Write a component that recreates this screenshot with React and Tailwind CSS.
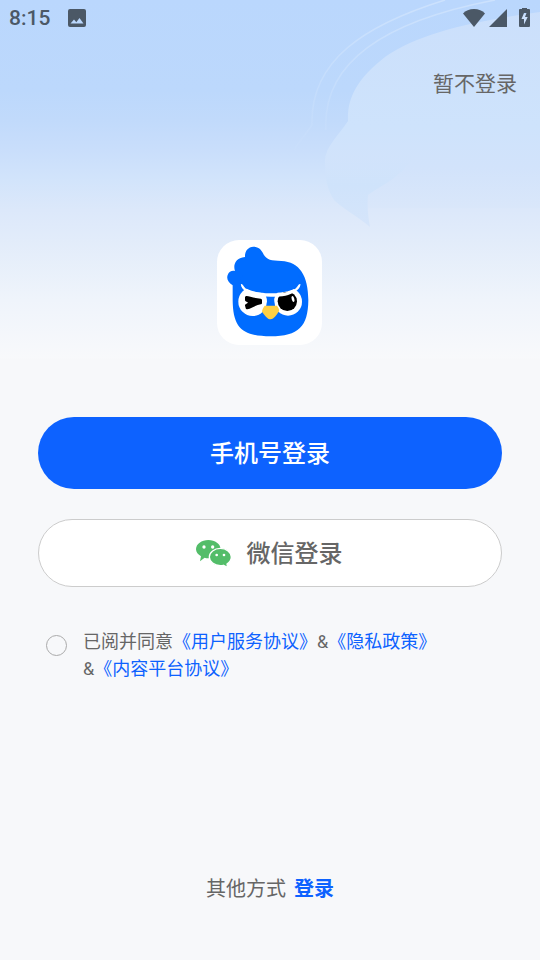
import React, { useState } from "react";

const StatusBar = () => (
  <div className="relative h-9 pl-[9px] pr-[10px] flex items-center justify-between text-[#4b5866]">
    <div className="flex items-center gap-[18px]">
      <span className="text-[21px] leading-9 font-medium font-[Roboto,sans-serif]">8:15</span>
      <svg className="w-[18px] h-[18px]" viewBox="0 0 18 18" aria-hidden="true">
        <path fill="currentColor" fillRule="evenodd" d="M2 0h14a2 2 0 0 1 2 2v14a2 2 0 0 1-2 2H2a2 2 0 0 1-2-2V2a2 2 0 0 1 2-2zM2.500 14.500h13L11.500 9l-3.200 4.200L6 10.500z" />
      </svg>
    </div>
    <div className="flex items-center">
      <svg className="w-[22px] h-[19px]" viewBox="0 0 22 19" aria-hidden="true">
        <path fill="currentColor" d="M11 18 0 4.500C2.500 1.500 6.500 0 11 0S19.500 1.500 22 4.500z" />
      </svg>
      <svg className="w-[18px] h-[18px] ml-1" viewBox="0 0 18 18" aria-hidden="true">
        <path fill="currentColor" d="M18 0v18H0z" />
      </svg>
      <svg className="w-[11px] h-5 ml-3" viewBox="0 0 11 20" aria-hidden="true">
        <path fill="currentColor" fillRule="evenodd" d="M3 0h5v1h2a1 1 0 0 1 1 1v16a1 1 0 0 1-1 1H1a1 1 0 0 1-1-1V2a1 1 0 0 1 1-1h2zM5 5l-2.500 6H5v5.500L8.700 9H6l1.500-4z" />
      </svg>
    </div>
  </div>
);

// pale speech bubble and its outlines behind the header
const HeaderArt = () => (
  <svg className="absolute top-0 right-0 w-[280px] h-[240px]" viewBox="0 0 280 240" fill="none" aria-hidden="true">
    <defs>
      <linearGradient id="bubble" x1="0" y1="0" x2="0" y2="210" gradientUnits="userSpaceOnUse">
        <stop offset="0" stopColor="#cbdffb" />
        <stop offset="0.6" stopColor="#cee3fc" />
        <stop offset="0.8" stopColor="#d2e3fb" />
        <stop offset="1" stopColor="#dae7fa" />
      </linearGradient>
      <linearGradient id="tail" x1="0" y1="155" x2="0" y2="230" gradientUnits="userSpaceOnUse">
        <stop offset="0" stopColor="#cfe3fc" stopOpacity="0" />
        <stop offset="0.4" stopColor="#cfe3fb" />
        <stop offset="1" stopColor="#d6e5fa" />
      </linearGradient>
      <linearGradient id="line" x1="0" y1="0" x2="0" y2="150" gradientUnits="userSpaceOnUse">
        <stop offset="0" stopColor="#d4e6fd" stopOpacity="0.7" />
        <stop offset="1" stopColor="#d4e6fd" stopOpacity="0.1" />
      </linearGradient>
    </defs>
    <path fill="url(#bubble)" d="M280 12C220 20 160 32 125 57C97 79 87 98 88 121C78 136 66 146 65 160C65 178 68 191 75 201L108 208H280z" />
    <path fill="url(#tail)" d="M65 155C64 178 68 192 75 201C88 212 100 218 110 227C108 215 107 206 108 195C125 183 140 178 155 155z" />
    <path stroke="url(#line)" strokeWidth="1.500" d="M185 0C105 25 50 60 52 125M235 0C130 20 62 60 66 130M52 125C46 134 38 143 34 150" />
  </svg>
);

const BirdLogo = () => (
  <svg className="w-[105px] h-[105px]" viewBox="21 24 315 315" role="img" aria-label="logo">
    <rect x="21" y="24" width="315" height="315" rx="66" fill="#fff" />
    <path fill="#006cff" d="M68 160C54 151 49 141 53 129C57 118 66 115 75 117C69 101 75 77 105 75C104 57 114 45 130 44C145 44 154 53 159 64C169 84 183 86 214 87C269 89 295 132 295 205C294 284 266 313 182 313C97 313 69 288 68 205z" />
    <circle cx="128" cy="209" r="43" fill="#fff" />
    <circle cx="234" cy="209" r="42" fill="#fff" />
    <circle cx="232" cy="208" r="29" fill="#000" />
    <ellipse cx="249" cy="201" rx="4" ry="9" fill="#fff" transform="rotate(-15 249 201)" />
    <path fill="#006cff" d="M84 151C108 176 138 183 182 183S256 176 279 151L265 130H98z" />
    <path fill="#fff" d="M93 156C98 154 101 164 108 170C126 181 152 184 182 184S240 181 256 170C263 164 266 154 271 156C273 163 265 173 255 179C238 190 220 194 182 194S126 190 109 179C99 173 91 163 93 156z" />
    <path fill="#006cff" d="M173 195h18l4 27h-26z" />
    <path fill="#ffd044" d="M164 221H201C206 229 209 234 207 238C200 248 192 262 182 262S163 248 156 239C156 233 160 227 164 221z" />
    <path fill="#000" stroke="#000" strokeWidth="8" strokeLinejoin="round" d="M109 196C117 195 124 202 152 204V213C134 215 123 226 111 228L109 220L122 212L109 204z" />
  </svg>
);

const WechatIcon = () => (
  <svg className="w-[35px] h-7" viewBox="0 0 105 84" aria-hidden="true">
    <path fill="#53bd69" d="M37 0C57 0 74 12 74 28S57 55 37 55C33 55 29 54 26 53L12 64L15 49C6 44 0 36 0 28C0 12 17 0 37 0z" />
    <path fill="#53bd69" stroke="#fff" strokeWidth="4" d="M73 25C91 25 106 37 106 51C106 60 101 67 93 72L95 83L82 76C79 77 76 77 73 77C55 77 40 65 40 51S55 25 73 25z" />
    <g fill="#fff">
      <circle cx="24" cy="21" r="5" />
      <circle cx="50" cy="21" r="5" />
      <circle cx="62" cy="45" r="4" />
      <circle cx="84" cy="45" r="4" />
    </g>
  </svg>
);

const PolicyLink = ({ href, children }) => (
  <a href={href} className="text-[#0d62ff]">{children}</a>
);

const App = () => {
  const [agreed, setAgreed] = useState(false);

  return (
    <div lang="zh-CN" className="relative min-h-screen flex flex-col overflow-hidden bg-[#f7f8fa] bg-[linear-gradient(to_bottom,#bad7fd_0px,#bcd8fc_90px,#c1dafb_120px,#c9defb_150px,#d2e4fb_180px,#dce8fa_210px,#e2ecfa_240px,#eff4fb_300px,#f8f9fb_358px,#f7f8fa_360px)] font-[Roboto,'Noto_Sans_CJK_SC',sans-serif] text-[#666]">
      <HeaderArt />
      <StatusBar />

      <header className="relative flex justify-end pt-8 pr-[23px]">
        <button type="button" className="text-[21px] leading-8 cursor-pointer">暂不登录</button>
      </header>

      <main className="relative flex-1 flex flex-col px-[38px] pt-[140px]">
        <div className="flex justify-center pr-[2px]">
          <BirdLogo />
        </div>

        <button type="button" className="mt-[72px] h-[72px] pt-[2px] rounded-full bg-[#0d62ff] text-white text-2xl font-medium cursor-pointer">
          手机号登录
        </button>
        <button type="button" className="mt-[30px] h-[68px] pt-[2px] pr-[2px] rounded-full border border-[#cccccc] bg-white text-2xl font-medium flex items-center justify-center gap-4 cursor-pointer">
          <WechatIcon />
          微信登录
        </button>

        <div className="mt-[41px] pl-2 flex items-start gap-4">
          <input
            id="agree"
            type="checkbox"
            checked={agreed}
            onChange={(e) => setAgreed(e.target.checked)}
            className="appearance-none shrink-0 mt-[7px] w-[21px] h-[21px] rounded-full border border-[#aaaaaa] checked:bg-[#0d62ff] checked:border-[#0d62ff]"
          />
          <label htmlFor="agree" className="text-lg leading-[27px]">
            已阅并同意<PolicyLink href="#terms">《用户服务协议》</PolicyLink>&amp;<PolicyLink href="#privacy">《隐私政策》</PolicyLink>
            <span className="block">&amp;<PolicyLink href="#content">《内容平台协议》</PolicyLink></span>
          </label>
        </div>
      </main>

      <footer className="relative flex justify-center items-center gap-2 pb-[55px] text-xl leading-8">
        <span>其他方式</span>
        <a href="#login" className="font-bold text-[#0d62ff]">登录</a>
      </footer>
    </div>
  );
};

export default App;
